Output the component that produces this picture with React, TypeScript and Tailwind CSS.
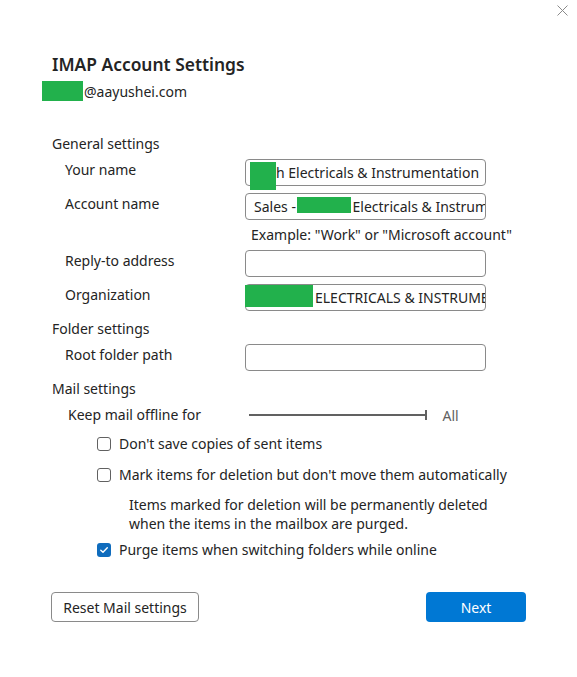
import React from "react";

function Field({ children, green, greenClass }: { children?: React.ReactNode; green?: boolean; greenClass?: string }) {
  return (
    <div className="relative w-[241px] h-[27px]">
      <div className="w-full h-full border border-[#8a8a8a] rounded-[4px] bg-white overflow-hidden whitespace-nowrap text-[14px] leading-[25px] text-[#242424]">
        {children}
      </div>
      {green && <div className={"absolute bg-[#22b14c] " + (greenClass ?? "")} />}
    </div>
  );
}

function Row({ label, children }: { label: string; children: React.ReactNode }) {
  return (
    <div className="flex items-start">
      <div className="w-[193px] shrink-0 pl-[13px] pt-[1px] leading-[20px] text-[14px] text-[#242424]">{label}</div>
      {children}
    </div>
  );
}

function Check({ checked, label }: { checked?: boolean; label: string }) {
  return (
    <div className="flex items-center h-[20px] pl-[45px]">
      {checked ? (
        <div className="w-[14px] h-[14px] rounded-[3px] bg-[#0f6cbd] flex items-center justify-center">
          <svg width="10" height="10" viewBox="0 0 10 10">
            <path d="M1.8 5.2 L4 7.3 L8.3 2.8" fill="none" stroke="white" strokeWidth="1.4" strokeLinecap="round" strokeLinejoin="round" />
          </svg>
        </div>
      ) : (
        <div className="w-[14px] h-[14px] rounded-[3px] border border-[#616161] bg-white" />
      )}
      <span className="ml-[8px] text-[14px] text-[#242424] leading-[20px] whitespace-nowrap">{label}</span>
    </div>
  );
}

export default function App() {
  return (
    <div className="relative w-[577px] h-[677px] bg-white font-['Noto_Sans','Liberation_Sans',sans-serif] text-[#242424]">
      <div className="absolute right-[9px] top-[5px]">
        <svg width="11" height="11" viewBox="0 0 11 11">
          <path d="M0.5 0.5 L10.5 10.5 M10.5 0.5 L0.5 10.5" stroke="#8a8a8a" strokeWidth="1" />
        </svg>
      </div>
      <div className="flex flex-col pt-[50px]">
        <div className="pl-[52px] text-[17.4px] font-semibold leading-[28px] text-[#242424]">IMAP Account Settings</div>
        <div className="pl-[42px] mt-[3px] flex items-center h-[20px] text-[14px]">
          <div className="w-[41px] h-[20px] bg-[#22b14c]" />
          <span className="ml-[1px]">@aayushei.com</span>
        </div>

        <div className="pl-[52px] mt-[33px] text-[14px] leading-[20px]">General settings</div>
        <div className="pl-[52px] mt-[5px] flex flex-col">
          <Row label="Your name">
            <Field green greenClass="left-[5px] top-[3px] w-[26px] h-[28px]">
              <span className="pl-[30px]">h Electricals &amp; Instrumentation</span>
            </Field>
          </Row>
          <div className="mt-[7px]">
            <Row label="Account name">
              <Field green greenClass="left-[52px] top-[4px] w-[54px] h-[16px]">
                <span className="pl-[8px]">Sales - </span>
                <span className="pl-[53px]">Electricals &amp; Instrumentation</span>
              </Field>
            </Row>
          </div>
          <div className="mt-[5px] pl-[199px] text-[14px] leading-[20px]">Example: "Work" or "Microsoft account"</div>
          <div className="mt-[5px]">
            <Row label="Reply-to address">
              <Field />
            </Row>
          </div>
          <div className="mt-[7px]">
            <Row label="Organization">
              <Field green greenClass="left-0 top-[1px] w-[68px] h-[22px]">
                <span className="pl-[69px]">ELECTRICALS &amp; INSTRUMENTATION</span>
              </Field>
            </Row>
          </div>
        </div>

        <div className="pl-[52px] mt-[8px] text-[14px] leading-[20px]">Folder settings</div>
        <div className="pl-[52px] mt-[5px]">
          <Row label="Root folder path">
            <Field />
          </Row>
        </div>

        <div className="pl-[52px] mt-[8px] text-[14px] leading-[20px]">Mail settings</div>
        <div className="pl-[52px] mt-[6px] flex items-center h-[20px]">
          <div className="w-[197px] shrink-0 pl-[16px] text-[14px] leading-[20px]">Keep mail offline for</div>
          <div className="flex items-center">
            <div className="w-[176px] h-[1.5px] bg-[#616161]" />
            <div className="w-[1.5px] h-[10px] bg-[#616161]" />
          </div>
          <span className="ml-[16px] text-[14px] text-[#616161]">All</span>
        </div>

        <div className="pl-[52px] mt-[9px] flex flex-col">
          <Check label="Don't save copies of sent items" />
          <div className="mt-[11px]">
            <Check label="Mark items for deletion but don't move them automatically" />
          </div>
          <div className="mt-[10px] pl-[77px] text-[14px] leading-[19px]">
            Items marked for deletion will be permanently deleted
            <br />
            when the items in the mailbox are purged.
          </div>
          <div className="mt-[7px]">
            <Check checked label="Purge items when switching folders while online" />
          </div>
        </div>

        <div className="mt-[32px] pl-[51px] pr-[51px] flex justify-between">
          <button className="w-[148px] h-[30px] border border-[#8a8a8a] rounded-[4px] bg-white text-[14px] text-[#242424]">
            Reset Mail settings
          </button>
          <button className="w-[100px] h-[30px] rounded-[4px] bg-[#0078d4] text-[14px] text-white">Next</button>
        </div>
      </div>
    </div>
  );
}
